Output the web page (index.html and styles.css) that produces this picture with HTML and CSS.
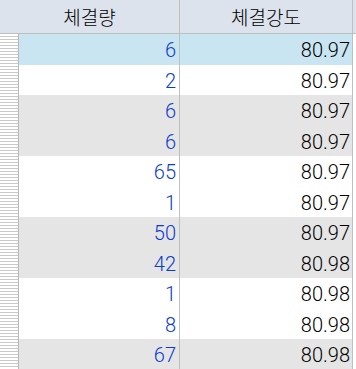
FILE: index.html
```html
<!DOCTYPE html>
<html lang="ko">
<head>
<meta charset="utf-8">
<link rel="stylesheet" href="styles.css">
</head>
<body>
<div class="grid">
  <div class="header">
    <div class="hcell hcell-1">체결량</div>
    <div class="hcell hcell-2">체결강도</div>
  </div>
  <div class="body">
    <div class="strip"></div>
    <div class="rows">
      <div class="row sel"><div class="c1">6</div><div class="c2">80.97</div></div>
      <div class="row"><div class="c1">2</div><div class="c2">80.97</div></div>
      <div class="row alt"><div class="c1">6</div><div class="c2">80.97</div></div>
      <div class="row alt"><div class="c1">6</div><div class="c2">80.97</div></div>
      <div class="row"><div class="c1">65</div><div class="c2">80.97</div></div>
      <div class="row"><div class="c1">1</div><div class="c2">80.97</div></div>
      <div class="row alt"><div class="c1">50</div><div class="c2">80.97</div></div>
      <div class="row alt"><div class="c1">42</div><div class="c2">80.98</div></div>
      <div class="row"><div class="c1">1</div><div class="c2">80.98</div></div>
      <div class="row"><div class="c1">8</div><div class="c2">80.98</div></div>
      <div class="row alt"><div class="c1">67</div><div class="c2">80.98</div></div>
    </div>
  </div>
</div>
</body>
</html>
```

FILE: styles.css
```css
html, body {
  margin: 0;
  padding: 0;
  background: #ffffff;
  overflow: hidden;
}
.grid {
  width: 356px;
  height: 369px;
  overflow: hidden;
  font-family: Roboto, "Liberation Sans", "Noto Sans CJK KR", sans-serif;
}
.header {
  display: flex;
  height: 33px;
  border-bottom: 1px solid #bfbfbf;
  background: #dce3ec;
}
.hcell {
  display: flex;
  align-items: center;
  justify-content: center;
  font-family: "Noto Sans CJK KR", sans-serif;
  font-weight: 300;
  font-size: 19px;
  color: #000;
  border-right: 1px solid #bfbfbf;
  box-sizing: border-box;
}
.hcell-1 { width: 180px; }
.hcell-2 { width: 173px; }
.body {
  display: flex;
}
.strip {
  width: 18px;
  flex: none;
  border-right: 1px solid #b8b8b8;
  background: repeating-linear-gradient(to bottom, #ffffff 0 2px, #c9c9c9 2px 3px);
  height: 336px;
}
.rows {
  display: flex;
  flex-direction: column;
}
.row {
  display: flex;
  height: 30.5px;
  flex: none;
  background: #ffffff;
}
.row.alt { background: #e5e5e5; }
.row.sel { background: #c8e5f1; }
.c1, .c2 {
  box-sizing: border-box;
  border-right: 1px solid #bfbfbf;
  text-align: right;
  font-size: 20px;
  font-weight: 300;
  line-height: 30.5px;
  padding-top: 1px;
}
.c1 {
  width: 161px;
  padding-right: 3px;
  color: #0a3ccf;
}
.c2 {
  width: 173px;
  padding-right: 2px;
  color: #000;
}
```
